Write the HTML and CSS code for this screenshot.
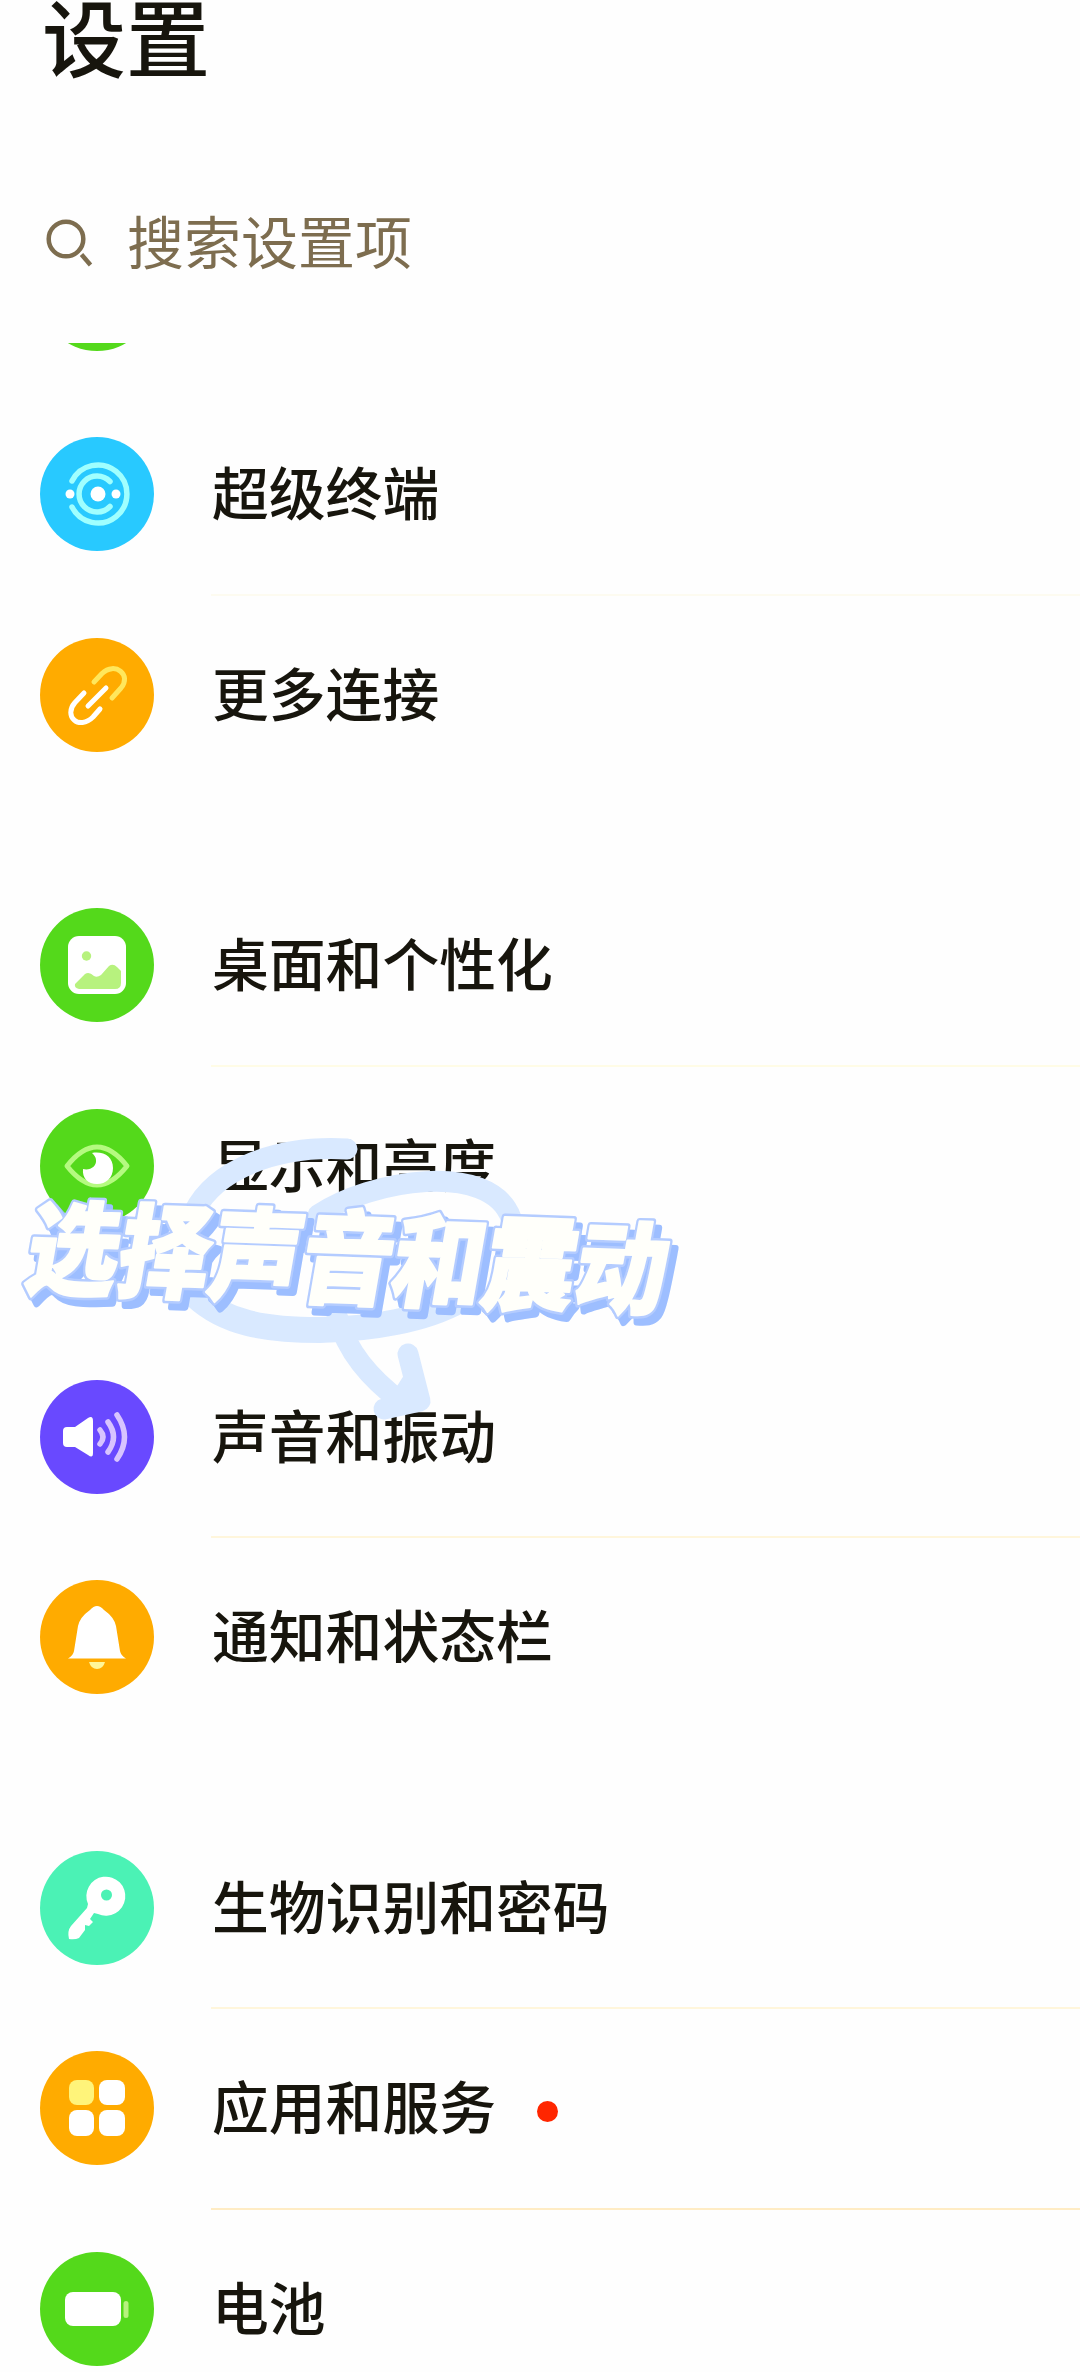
FILE: index.html
```
<!DOCTYPE html>
<html lang="zh-CN">
<head>
<meta charset="utf-8">
<title>设置</title>
<link rel="stylesheet" href="styles.css">
</head>
<body>
<main class="screen">
  <h1 class="title">设置</h1>
  <div class="search">
    <svg class="search-icon" viewBox="0 0 50 50"><circle cx="22" cy="22" r="17.3"/><path d="M37.500 37.500l9 10.500"/></svg>
    <span class="placeholder">搜索设置项</span>
  </div>
  <div class="list">
    <div class="clipped"><span class="disc green"></span></div>
    <div class="row faint">
      <svg class="icon blue" viewBox="0 0 114 114"><g class="line aqua"><path d="M32 44A29 29 0 1 1 32 70"/><path d="M70 44.500A18 18 0 1 0 70 69.500"/></g><circle class="w" cx="58" cy="57" r="7.500"/><circle class="w" cx="30" cy="57" r="4.500"/><circle class="w" cx="76" cy="57" r="4.500"/></svg>
      <span class="label">超级终端</span>
    </div>
    <div class="row last">
      <svg class="icon orange" viewBox="0 0 114 114"><g class="line thin"><path class="pale" d="M54 44L62 35.500C75 23 92 37 81 50L72 60"/><path d="M48 68L66 50M44 55L35 64.500C23 78 39 93 53 79L60 71"/></g></svg>
      <span class="label">更多连接</span>
    </div>
    <div class="row light">
      <svg class="icon green" viewBox="0 0 114 114"><rect class="w" x="28" y="28" width="58" height="58" rx="11"/><circle class="lime" cx="46.500" cy="48" r="4.700"/><path class="lime" d="M35 76L45 66Q49 63 54 68Q57 70 61 67L69 58Q73 55 77 59L81 63V75Q81 81 75 81H39Q34 80 35 76Z"/></svg>
      <span class="label">桌面和个性化</span>
    </div>
    <div class="row last">
      <svg class="icon green" viewBox="0 0 114 114"><path class="eye" d="M27 57Q57 19 87 57Q57 95 27 57Z"/><path class="w" d="M52 44C64 42 73 48 73 59C73 69 66 75 57 75C48 75 42 69 43 60C50 62 57 57 56 51C56 48 54 46 52 44Z"/></svg>
      <span class="label">显示和亮度</span>
    </div>
    <div class="row">
      <svg class="icon violet" viewBox="0 0 114 114"><path class="w" d="M23 51Q23 47 27 47H35L48 38Q53 35 53 41V73Q53 79 48 75L35 67H27Q23 67 23 63Z"/><g class="line lilac"><path d="M60 50Q66 57 60 64"/><path d="M68 42Q79 57 68 72"/><path d="M77 35Q92 57 77 79"/></g></svg>
      <span class="label">声音和振动</span>
    </div>
    <div class="row last">
      <svg class="icon orange" viewBox="0 0 114 114"><path class="w" d="M28 78.500Q33 76 34 71L38 46Q40 37 50 30Q57 22 64 30Q74 37 76 46L80 71Q81 76 86 78.500Z"/><path class="pale-fill" d="M49 82H65Q63 89 57 89T49 82Z"/></svg>
      <span class="label">通知和状态栏</span>
    </div>
    <div class="row">
      <svg class="icon mint" viewBox="0 0 114 114"><path class="w" fill-rule="evenodd" d="M48 53A19.500 19.500 0 1 1 58 63L54 62L50 68L53 71L49 75L45 74L45 79L39 87Q35 89 29 88Q27 80 31 75L47 57ZM61 44a5.500 5.500 0 1 0 11 0a5.500 5.500 0 1 0-11 0"/></svg>
      <span class="label">生物识别和密码</span>
    </div>
    <div class="row strong">
      <svg class="icon orange" viewBox="0 0 114 114"><rect class="yellow" x="29" y="29" width="25" height="25" rx="8"/><rect class="w" x="59" y="29" width="26" height="25" rx="8"/><rect class="w" x="29" y="59" width="25" height="26" rx="8"/><rect class="w" x="59" y="59" width="26" height="26" rx="8"/></svg>
      <span class="label">应用和服务</span><span class="dot"></span>
    </div>
    <div class="row last">
      <svg class="icon green" viewBox="0 0 114 114"><rect class="w" x="25" y="40" width="56" height="34" rx="8"/><rect class="lime" x="83.500" y="49" width="5" height="17" rx="2.500"/></svg>
      <span class="label">电池</span>
    </div>
  </div>
  <svg class="overlay" viewBox="0 0 700 320">
    <g class="arrow">
      <path d="M347 29C275 25 215 50 194 92M318 95C370 60 490 40 511 98"/>
      <path class="heavy" d="M196 176C225 203 265 210 320 210C370 209 425 200 460 180"/>
      <path d="M337 196C347 232 370 258 400 281M408 234L420 281L384 289M412 262L400 281"/>
    </g>
    <defs><text id="caption" textLength="640">选择声音和震动</text></defs>
    <g transform="matrix(1 .035 -.19 1.1 22 165)">
      <use class="shade" href="#caption" x="7" y="6"/>
      <use class="edge" href="#caption"/>
      <use class="face" href="#caption"/>
    </g>
  </svg>
</main>
</body>
</html>
```
FILE: styles.css
```
body { margin: 0; background: #fefefe; font-family: "Noto Sans CJK SC", sans-serif; color: #17150d; }
.screen { position: relative; width: 1080px; height: 2372px; overflow: hidden; }
.title { margin: 0; padding: 0 0 0 42px; height: 200px; font-size: 84px; line-height: 69px; font-weight: 500; box-sizing: border-box; }
.search { display: flex; align-items: center; gap: 33px; height: 84px; padding-left: 44px; font-size: 57px; color: #7d6d4f; }
.placeholder { line-height: 84px; padding-bottom: 7px; }
.search-icon { width: 50px; height: 50px; fill: none; stroke: #7d6d4f; stroke-width: 4.5; }
.list { padding-top: 59px; }
.clipped { height: 51px; overflow: hidden; padding-left: 40px; display: flex; align-items: flex-start; }
.disc { width: 114px; height: 114px; border-radius: 50%; margin-top: -106px; flex: none; }
.row { display: flex; align-items: center; height: 200.5px; padding-left: 40px; position: relative; }
.row::after { content: ""; position: absolute; left: 211px; right: 0; bottom: -1px; height: 2px; background: #fff6dc; }
.row.faint::after { background: #fdfbf0; }
.row.light::after { background: #fffce6; }
.row.strong::after { background: #ffecc4; }
.row.last { height: 270.7px; align-items: flex-start; padding-top: 43.5px; box-sizing: border-box; }
.row.last::after { display: none; }
.icon { width: 114px; height: 114px; border-radius: 50%; flex: none; }
.label { margin-left: 58px; height: 114px; font-size: 56.8px; font-weight: 500; line-height: 107px; white-space: nowrap; }
.green { background: #54d91b; }
.blue { background: #28c9ff; }
.orange { background: #ffab00; }
.violet { background: #6949ff; }
.mint { background: #4bf2b5; }
.w { fill: #fff; }
.lime { fill: #b7f27e; }
.yellow { fill: #fff47a; }
.pale-fill { fill: #fff69a; }
.line { fill: none; stroke: #fff; stroke-width: 5.5; stroke-linecap: round; stroke-linejoin: round; }
.thin { stroke-width: 5; }
.aqua { stroke: #a0ffff; }
.pale { stroke: #ffe75c; }
.lilac { stroke: #d8c4ff; }
.eye { fill: none; stroke: #b5fa80; stroke-width: 5; stroke-linejoin: round; }
.dot { width: 21px; height: 21px; border-radius: 50%; background: #ff2600; margin: 7px 0 0 41px; }
.overlay { position: absolute; left: 0; top: 1120px; width: 700px; height: 320px; }
.arrow { fill: none; stroke: #d9e9ff; stroke-width: 21; stroke-linecap: round; stroke-linejoin: round; }
.heavy { stroke-width: 26; }
#caption { font-size: 92px; font-weight: 900; }
.shade { fill: #9dbeff; stroke: #9dbeff; stroke-width: 7px; stroke-linejoin: round; }
.edge { fill: #b4ccff; stroke: #b4ccff; stroke-width: 6.5px; stroke-linejoin: round; }
.face { fill: #fffffa; stroke: #fffffa; stroke-width: 2px; stroke-linejoin: round; }
```
